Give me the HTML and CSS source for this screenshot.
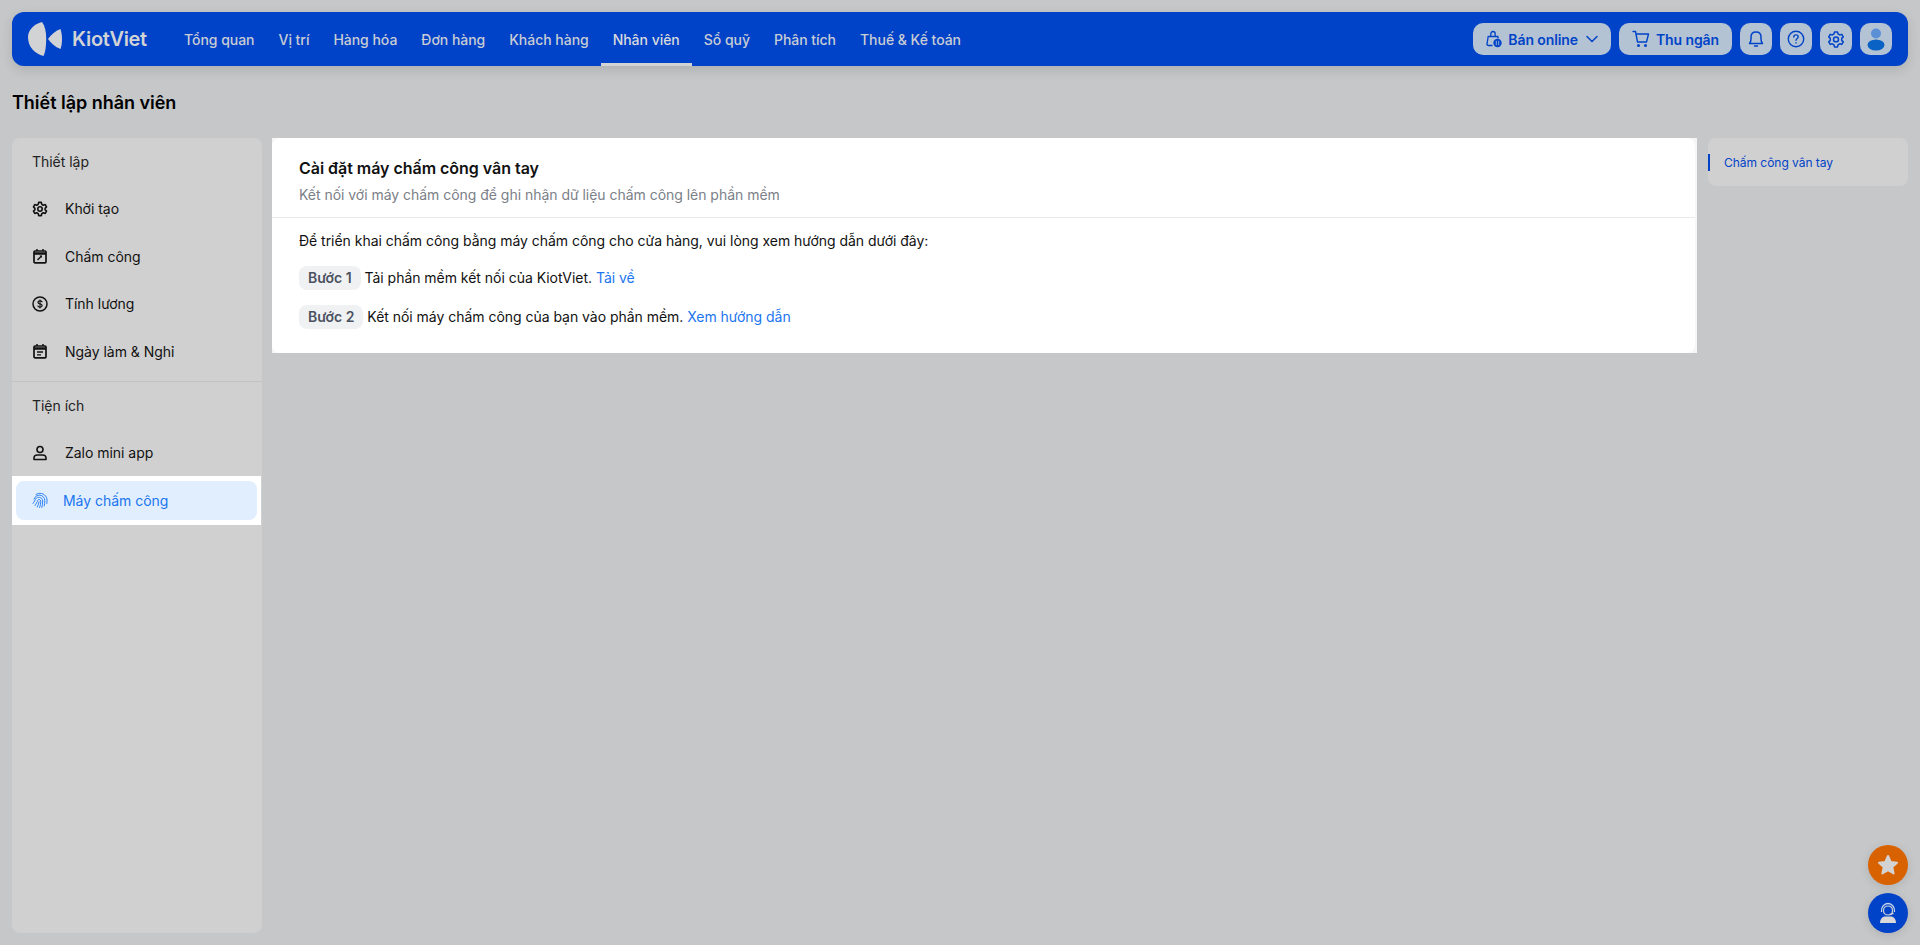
FILE: index.html
```html
<!DOCTYPE html>
<html lang="vi">
<head>
    <meta charset="UTF-8">
    <meta name="viewport" content="width=device-width, initial-scale=1.0">
    <title>Thiết lập nhân viên</title>
    <link rel="stylesheet" href="styles.css">
</head>
<body>
    <header class="topbar">
        <div class="logo">
            <svg width="34" height="34" viewBox="0 0 34 34" fill="currentColor">
                <path d="M14 0C17 4 18.200 10 18.200 16C18.200 23 17.500 30 15.500 34C7 32 0 25 0 15C0 8 6 2 14 0Z"/>
                <path d="M32.500 7C33.500 10 34 14 34 17C34 21 33.500 24 32.500 27C27 25 23 21 20 17C23 13 27 9 32.500 7Z"/>
            </svg>
            <span>KiotViet</span>
        </div>
        <nav class="nav">
            <a>Tổng quan</a>
            <a>Vị trí</a>
            <a>Hàng hóa</a>
            <a>Đơn hàng</a>
            <a>Khách hàng</a>
            <a class="active">Nhân viên</a>
            <a>Sổ quỹ</a>
            <a>Phân tích</a>
            <a>Thuế &amp; Kế toán</a>
        </nav>
        <div class="actions">
            <button class="btn">
                <svg width="16" height="18" viewBox="0 0 16 18" fill="none" stroke="currentColor" stroke-width="1.300">
                    <path d="M6.500 15.500H2.500C1.500 15.500 .8 14.800 1 14L2.200 6.500H11.800L12.200 8.500"/>
                    <path d="M4.800 6.500V4C4.800 2.500 5.700 1.500 7 1.500C8.300 1.500 9.200 2.500 9.200 4V6.500"/>
                    <circle cx="11.500" cy="13" r="4.200" fill="currentColor" stroke="none"/>
                    <path d="M10.300 10.800V15.200M12.700 10.800V15.200" stroke="#b4c3d4" stroke-width=".8"/>
                </svg>
                Bán online
                <svg class="chev" width="12" height="12" viewBox="0 0 12 12" fill="none" stroke="currentColor" stroke-width="1.500" stroke-linecap="round" stroke-linejoin="round"><path d="M1 3.500L6 8.500L11 3.500"/></svg>
            </button>
            <button class="btn">
                <svg width="18" height="18" viewBox="0 0 18 18" fill="none" stroke="currentColor" stroke-width="1.400" stroke-linecap="round" stroke-linejoin="round">
                    <path d="M1 1.500H3.500L5.500 12H14.500L16.500 4H4"/>
                    <circle cx="6.500" cy="15.500" r=".8"/>
                    <circle cx="13.500" cy="15.500" r=".8"/>
                </svg>
                Thu ngân
            </button>
            <button class="btn btn-icon">
                <svg width="18" height="18" viewBox="0 0 18 18" fill="none" stroke="currentColor" stroke-width="1.500" stroke-linecap="round" stroke-linejoin="round">
                    <path d="M2.500 13.500H15.500C14.300 12.300 14 11 14 9V7C14 4 12 2 9 2C6 2 4 4 4 7V9C4 11 3.700 12.300 2.500 13.500Z"/>
                    <path d="M7.500 16H10.500"/>
                </svg>
            </button>
            <button class="btn btn-icon">
                <svg width="18" height="18" viewBox="0 0 18 18" fill="none" stroke="currentColor" stroke-width="1.400" stroke-linecap="round">
                    <circle cx="9" cy="9" r="7.700"/>
                    <path d="M6.800 7C6.800 5.700 7.800 4.900 9 4.900C10.300 4.900 11.200 5.700 11.200 6.900C11.200 8.400 9 8.500 9 10.300"/>
                    <path d="M9 12.800V13"/>
                </svg>
            </button>
            <button class="btn btn-icon">
                <svg width="18" height="18" viewBox="0 0 24 24" fill="none" stroke="currentColor" stroke-width="2" stroke-linecap="round" stroke-linejoin="round">
                    <path d="M10 2.500H14L14.700 5.300L16.900 6.600L19.700 5.800L21.700 9.200L19.600 11.200V13.800L21.700 15.800L19.700 19.200L16.900 18.400L14.700 19.700L14 22.500H10L9.300 19.700L7.100 18.400L4.300 19.200L2.300 15.800L4.400 13.800V11.200L2.300 9.200L4.300 5.800L7.100 6.600L9.300 5.300Z"/>
                    <circle cx="12" cy="12.500" r="3.300"/>
                </svg>
            </button>
            <button class="btn btn-icon">
                <svg width="26" height="26" viewBox="0 0 26 26">
                    <circle cx="13" cy="7.500" r="5" fill="#5c90d6"/>
                    <ellipse cx="13" cy="19" rx="8.500" ry="5.500" fill="#0a62c4"/>
                </svg>
            </button>
        </div>
    </header>

    <h1 class="page-title">Thiết lập nhân viên</h1>

    <div class="layout">
        <aside class="sidebar">
            <div class="side-group">
                <div class="side-label">Thiết lập</div>
                <a class="side-item">
                    <svg width="16" height="16" viewBox="0 0 24 24" fill="none" stroke="currentColor" stroke-width="2.400" stroke-linecap="round" stroke-linejoin="round">
                        <path d="M10 2H14L14.700 5L16.900 6.300L19.800 5.400L21.800 8.900L19.600 11V13L21.800 15.100L19.800 18.600L16.900 17.700L14.700 19L14 22H10L9.300 19L7.100 17.700L4.200 18.600L2.200 15.100L4.400 13V11L2.200 8.900L4.200 5.400L7.100 6.300L9.300 5Z"/>
                        <circle cx="12" cy="12" r="3.300"/>
                    </svg>
                    Khởi tạo
                </a>
                <a class="side-item">
                    <svg width="16" height="16" viewBox="0 0 16 16" fill="none" stroke="currentColor" stroke-width="1.700">
                        <rect x="2" y="3" width="12" height="11.800" rx="1"/>
                        <path d="M2 5.500H14" stroke-width="2.500"/>
                        <path d="M5 1V3M11 1V3" stroke-width="1.500"/>
                        <path d="M5.500 12L9.500 8" stroke-width="1.500"/>
                        <path d="M7.500 7.500H10V10Z" fill="currentColor" stroke="none"/>
                    </svg>
                    Chấm công
                </a>
                <a class="side-item">
                    <svg width="16" height="16" viewBox="0 0 16 16" fill="none" stroke="currentColor" stroke-width="1.500" stroke-linecap="round">
                        <circle cx="8" cy="8" r="7"/>
                        <path d="M10 5.800C9.700 5.200 9 4.900 8 4.900C6.800 4.900 6 5.500 6 6.400C6 8.400 10.100 7.500 10.100 9.600C10.100 10.500 9.200 11.100 8 11.100C7 11.100 6.200 10.700 5.900 10.100" stroke-width="1.200"/>
                        <path d="M8 3.900V12.100" stroke-width="1"/>
                    </svg>
                    Tính lương
                </a>
                <a class="side-item">
                    <svg width="16" height="16" viewBox="0 0 16 16" fill="none" stroke="currentColor" stroke-width="1.700">
                        <rect x="2" y="3" width="12" height="11.800" rx="1"/>
                        <path d="M2 5.500H14" stroke-width="2.500"/>
                        <path d="M5 1V3M11 1V3" stroke-width="1.500"/>
                        <path d="M5 9H11M5 11.800H9" stroke-width="1.300"/>
                    </svg>
                    Ngày làm &amp; Nghỉ
                </a>
            </div>
            <div class="side-group side-group-second">
                <div class="side-label">Tiện ích</div>
                <a class="side-item">
                    <svg width="16" height="16" viewBox="0 0 16 16" fill="none" stroke="currentColor" stroke-width="1.600">
                        <circle cx="8" cy="4.500" r="3"/>
                        <path d="M2 14.500V13C2 11 3.500 10 5.500 10H10.500C12.500 10 14 11 14 13V14.500Z" stroke-linejoin="round"/>
                    </svg>
                    Zalo mini app
                </a>
                <div class="side-highlight">
                    <a class="side-item active">
                        <svg width="16" height="16" viewBox="0 0 16 16" fill="none" stroke="currentColor" stroke-width=".9" stroke-linecap="round">
                            <path d="M4 2.500C7 .3 12.500 1 14.500 5.500C15.300 7.500 15 10 14.800 11.500"/>
                            <path d="M2 7C3 4.200 5.500 3.200 7.500 3.200C10.500 3.200 12.800 5.500 12.800 8.500C12.800 10.500 12.600 12.500 12.200 14"/>
                            <path d="M1 11.500C2.500 9.500 3 8 3.700 6.800C4.800 5.300 6 5.200 7.500 5.400C9.500 5.700 10.700 7 10.700 9C10.700 11 10.400 13.500 9.800 15.500"/>
                            <path d="M3 13.500C4.500 11.500 5.300 9.500 5.800 8.300C6.300 7.200 8.500 7 8.700 9.200C8.800 11.500 8.300 13.800 7.500 15.500"/>
                            <path d="M5.200 15C6.200 13.200 6.800 11.500 7.100 9.800"/>
                        </svg>
                        Máy chấm công
                    </a>
                </div>
            </div>
        </aside>

        <div class="main-col">
            <div class="card-frame">
                <section class="card">
                    <div class="card-head">
                        <h2>Cài đặt máy chấm công vân tay</h2>
                        <p>Kết nối với máy chấm công để ghi nhận dữ liệu chấm công lên phần mềm</p>
                    </div>
                    <div class="card-body">
                        <p class="intro">Để triển khai chấm công bằng máy chấm công cho cửa hàng, vui lòng xem hướng dẫn dưới đây:</p>
                        <div class="step"><span class="chip">Bước 1</span><span>Tải phần mềm kết nối của KiotViet. <a class="link">Tải về</a></span></div>
                        <div class="step"><span class="chip">Bước 2</span><span>Kết nối máy chấm công của bạn vào phần mềm. <a class="link">Xem hướng dẫn</a></span></div>
                    </div>
                </section>
            </div>
        </div>

        <aside class="anchor">
            <a class="anchor-item">Chấm công vân tay</a>
        </aside>
    </div>

    <button class="fab fab-star">
        <svg width="24" height="24" viewBox="0 0 24 24" fill="#d3d3d3" stroke="#d3d3d3" stroke-width="2" stroke-linejoin="round">
            <path d="M12 3L14.700 9L21 9.700L16.300 14L17.600 20.500L12 17.200L6.400 20.500L7.700 14L3 9.700L9.300 9Z"/>
        </svg>
    </button>
    <button class="fab fab-help">
        <svg width="24" height="24" viewBox="0 0 24 24" fill="none">
            <path d="M5.500 11C5 6 8 2.500 12 2.500C16 2.500 19 6 18.500 11" stroke="#c9d6ec" stroke-width="1.300"/>
            <path d="M7.500 9.500C7.500 6.500 9.500 5 12 5C14.500 5 16.500 6.500 16.500 9.500C16.500 12.500 14.500 14 12 14C9.500 14 7.500 12.500 7.500 9.500Z" stroke="#d3d3d3" stroke-width="1.200"/>
            <path d="M17.500 12C16.500 13 15 13.500 13 13.500" stroke="#d3d3d3" stroke-width="1.200"/>
            <path d="M4 22C4 18 6.500 15.500 9 15.500H15C17.500 15.500 20 18 20 22Z" fill="#d8d8d8"/>
        </svg>
    </button>
</body>
</html>
```

FILE: styles.css
```css
* {
    box-sizing: border-box;
}

html,
body {
    height: 100%;
}

body {
    margin: 0;
    padding: 12px;
    display: flex;
    flex-direction: column;
    font-family: Inter, 'Noto Sans', sans-serif;
    font-size: 14px;
    letter-spacing: -0.03px;
    color: #111;
    background-color: #c6c7c9;
    overflow: hidden;
}

.topbar {
    display: flex;
    align-items: center;
    height: 54px;
    padding: 0 16px;
    background-color: #0043c8;
    border-radius: 12px;
    box-shadow: 0 4px 12px rgba(0, 0, 0, 0.12);
    flex-shrink: 0;
}

.logo {
    display: flex;
    align-items: center;
    gap: 10px;
    width: 144px;
    color: #d2d3d4;
    font-size: 20px;
    font-weight: 600;
    letter-spacing: -0.3px;
}

.nav {
    display: flex;
    align-self: stretch;
    flex: 1;
}

.nav a {
    display: flex;
    align-items: center;
    padding: 0 12px;
    font-size: 14px;
    font-weight: 500;
    color: #c9cdd4;
    border-bottom: 3px solid transparent;
    border-top: 3px solid transparent;
}

.nav a.active {
    color: #d8dadd;
    border-bottom-color: #d2d3d4;
}

.actions {
    display: flex;
    gap: 8px;
}

.btn {
    display: flex;
    align-items: center;
    gap: 6px;
    height: 32px;
    padding: 0 13px;
    border: none;
    border-radius: 10px;
    background-color: #b4c3d4;
    color: #0043c8;
    font-family: inherit;
    font-size: 14px;
    font-weight: 600;
    letter-spacing: -0.1px;
}

.chev {
    margin-left: 2px;
}

.btn-icon {
    width: 32px;
    padding: 0;
    justify-content: center;
}

.page-title {
    margin: 25px 0 23px;
    font-size: 18px;
    line-height: 24px;
    font-weight: 600;
    color: #000;
}

.layout {
    display: flex;
    gap: 10px;
    flex: 1;
    min-height: 0;
}

.sidebar {
    width: 250px;
    padding-top: 5px;
    background-color: #d0d0d0;
    border-radius: 8px;
    flex-shrink: 0;
}

.side-group {
    padding-bottom: 6px;
}

.side-group-second {
    border-top: 1px solid #c2c3c5;
    padding-top: 5px;
}

.side-label {
    display: flex;
    align-items: center;
    height: 37px;
    margin-bottom: 5px;
    padding-left: 20px;
    color: #222;
}

.side-item {
    display: flex;
    align-items: center;
    gap: 17px;
    height: 47.5px;
    padding-left: 20px;
    color: #111;
}

.side-highlight {
    margin-top: -1px;
    width: 249px;
    height: 49px;
    padding: 5px 4px;
    background-color: #fff;
}

.side-item.active {
    height: 39px;
    padding-left: 16px;
    gap: 15px;
    border-radius: 8px;
    background-color: #e1eefe;
    color: #1a75f0;
}

.main-col {
    flex: 1;
    min-width: 0;
}

.card-frame {
    background-color: #f6f6f7;
}

.card {
    background-color: #fff;
    border-radius: 8px;
    margin-right: 2px;
}

.card-head {
    padding: 20px 27px 12px;
    border-bottom: 1px solid #e8e9eb;
}

.card-head h2 {
    margin: 0 0 7px;
    font-size: 16px;
    line-height: 20px;
    font-weight: 600;
    color: #111;
}

.card-head p {
    margin: 0;
    line-height: 20px;
    color: #7c8087;
}

.card-body {
    padding: 13px 27px 24px;
}

.intro {
    margin: 0 0 15px;
    line-height: 20px;
}

.step {
    display: flex;
    align-items: center;
    gap: 4px;
    margin-bottom: 15px;
    line-height: 24px;
}

.step:last-child {
    margin-bottom: 0;
}

.chip {
    padding: 0 9px;
    border-radius: 8px;
    background-color: #f0f1f3;
    color: #4b5260;
    font-weight: 600;
}

.link {
    color: #1a75f0;
}

.anchor {
    width: 200px;
    height: 48px;
    margin-left: 1px;
    display: flex;
    align-items: center;
    background-color: #d0d0d0;
    border-radius: 8px;
    flex-shrink: 0;
}

.anchor-item {
    padding-left: 14px;
    line-height: 17px;
    font-size: 12px;
    color: #0043c8;
    border-left: 2px solid #0043c8;
}

.fab {
    position: fixed;
    right: 12px;
    display: flex;
    align-items: center;
    justify-content: center;
    width: 40px;
    height: 40px;
    padding: 0;
    border: none;
    border-radius: 50%;
    box-shadow: 0 2px 10px rgba(0, 0, 0, 0.12);
}

.fab-star {
    bottom: 60px;
    background-color: #d96200;
}

.fab-help {
    bottom: 12px;
    background-color: #0043c8;
}
```
